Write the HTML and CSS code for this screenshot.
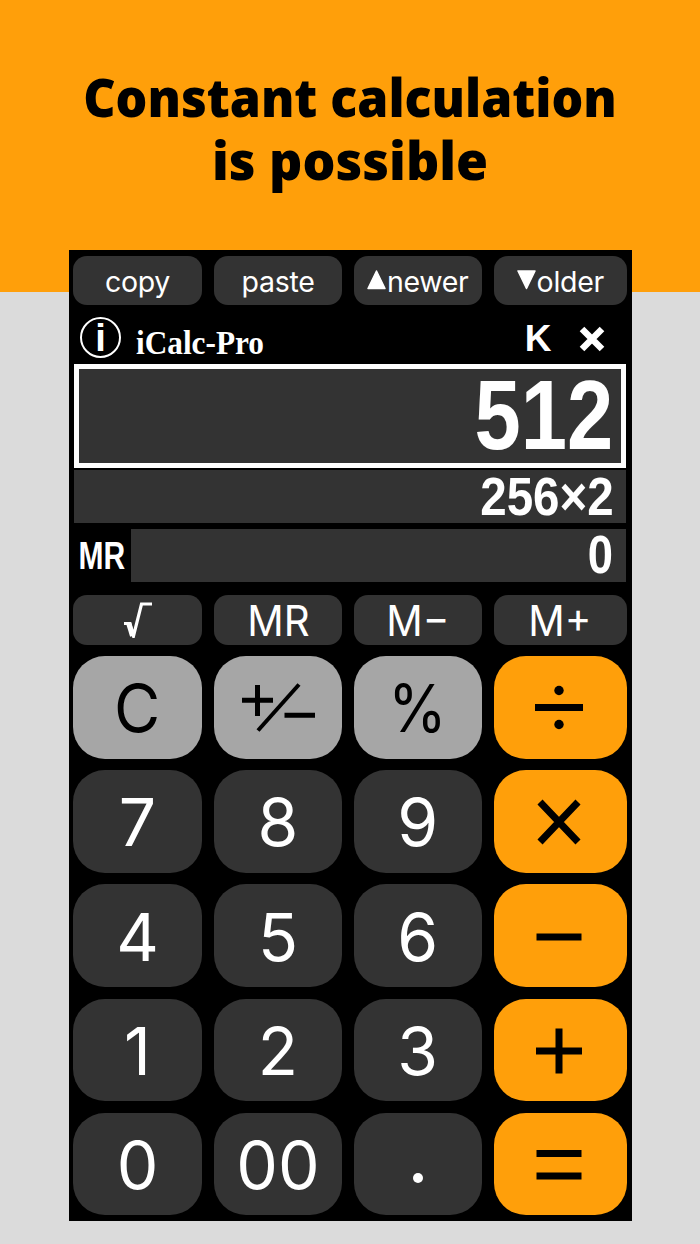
FILE: index.html
```
<!DOCTYPE html>
<html lang="en">
<head>
  <meta charset="UTF-8">
  <title>iCalc-Pro</title>
  <link rel="stylesheet" href="styles.css">
</head>
<body>
  <h1><span class="line1">Constant calculation</span><span class="line2">is possible</span></h1>

  <div class="calc">
    <div class="keys small">
      <button><span class="word">copy</span></button>
      <button><span class="word">paste</span></button>
      <button>
        <svg class="tri" width="20" height="20" viewBox="0 0 20 20"><path d="M9.500 1L18 18.500H1z"/></svg>
        <span class="word">newer</span>
      </button>
      <button>
        <svg class="tri" width="20" height="20" viewBox="0 0 20 20"><path d="M1 1h17L9.500 18.500z"/></svg>
        <span class="word">older</span>
      </button>
    </div>

    <div class="header">
      <div class="info"><span>i</span></div>
      <div class="name"><span>iCalc-Pro</span></div>
      <div class="constant">K</div>
      <svg class="mode" width="26" height="26" viewBox="0 0 26 26"><path d="M3 3l20 20M23 3L3 23"/></svg>
    </div>

    <div class="display"><span>512</span></div>
    <div class="formula"><span>256×2</span></div>
    <div class="memory">
      <div class="label"><span>MR</span></div>
      <div class="value"><span>0</span></div>
    </div>

    <div class="keys small mem">
      <button><svg width="30" height="36" viewBox="0 0 30 36"><path class="thin" d="M1 21.500h6L10.500 34L18.500 2H29"/><path class="thick" d="M5.700 21.500L9.500 34"/></svg></button>
      <button><span>MR</span></button>
      <button><span>M−</span></button>
      <button><span>M+</span></button>
    </div>

    <div class="keys big">
      <button class="gray"><span class="letter">C</span></button>
      <button class="gray"><svg width="76" height="50" viewBox="0 0 76 50"><path d="M2 18.200h31M17.500 3v31M44.500 33.200H75"/><path class="slash" d="M18 48.500L59 2.500"/></svg></button>
      <button class="gray"><span class="percent">%</span></button>
      <button class="op"><svg width="50" height="50" viewBox="0 0 50 50"><path d="M1 25.500h48"/><circle cx="25" cy="8.500" r="4.700"/><circle cx="25" cy="42.500" r="4.700"/></svg></button>
      <button><span>7</span></button>
      <button><span>8</span></button>
      <button><span>9</span></button>
      <button class="op"><svg width="50" height="50" viewBox="0 0 50 50"><path d="M6 6l38 40M44 6L6 46"/></svg></button>
      <button><span>4</span></button>
      <button><span>5</span></button>
      <button><span>6</span></button>
      <button class="op"><svg width="50" height="50" viewBox="0 0 50 50"><path d="M2.500 26h45"/></svg></button>
      <button><span>1</span></button>
      <button><span>2</span></button>
      <button><span>3</span></button>
      <button class="op"><svg width="50" height="50" viewBox="0 0 50 50"><path d="M2 26h46M25 3.500v45"/></svg></button>
      <button><span>0</span></button>
      <button><span>00</span></button>
      <button class="dot"><svg width="50" height="50" viewBox="0 0 50 50"><circle cx="25" cy="39" r="5"/></svg></button>
      <button class="op"><svg width="50" height="50" viewBox="0 0 50 50"><path d="M2.500 14.500h45M2.500 37h45"/></svg></button>
    </div>
  </div>
</body>
</html>
```
FILE: styles.css
```
* {
  box-sizing: border-box;
}

body {
  margin: 0;
  height: 1244px;
  overflow: hidden;
  background: linear-gradient(#ff9f0a 292px, #dbdbdb 292px);
  font-family: Inter, sans-serif;
}

h1 {
  height: 250px;
  margin: 0;
  padding-top: 65px;
  font-family: "Noto Sans", sans-serif;
  font-weight: 900;
  font-size: 53px;
  line-height: 63px;
  text-align: center;
  white-space: nowrap;
}

h1 span {
  display: block;
}

.line1 {
  transform: scaleX(0.943);
}

.line2 {
  transform: scaleX(0.978);
}

.calc {
  width: 563px;
  height: 971px;
  margin-left: 68.5px;
  padding: 5.500px 4px 0 4.500px;
  background: #000;
  color: #fff;
}

/* keys */
.keys {
  display: grid;
  grid-template-columns: 129px 128px 127.5px 133.5px;
  column-gap: 12px;
}

button {
  display: flex;
  align-items: center;
  justify-content: center;
  padding: 0;
  border: none;
  background: #333;
  color: #fff;
  font-family: Inter, sans-serif;
}

button span {
  padding-top: 2px;
}

svg {
  display: block;
}

.small button {
  height: 49.5px;
  border-radius: 14px;
  font-size: 28.5px;
}

.word {
  letter-spacing: -0.3px;
}

.tri {
  fill: #fff;
  stroke: #fff;
  stroke-width: 1.5;
  stroke-linejoin: round;
}

.mem {
  margin-top: 13.5px;
}

.mem button {
  font-size: 42px;
}

.mem button span {
  transform: scaleX(0.96);
}

.mem path {
  fill: none;
  stroke: #fff;
  stroke-width: 3.2;
}

.mem .thick {
  stroke-width: 5;
}

.big {
  margin-top: 11.5px;
  row-gap: 11.7px;
}

.big button {
  height: 102.5px;
  border-radius: 32px;
  font-size: 66px;
}

.big .gray {
  background: #a6a6a6;
  color: #000;
}

.big .op {
  background: #ff9f0a;
}

.letter {
  transform: scaleX(0.96);
}

.percent {
  transform: scaleX(0.9);
}

.gray path, .op path {
  fill: none;
  stroke: #000;
  stroke-width: 5;
}

.gray .slash {
  stroke-width: 4;
}

.op path {
  stroke-width: 7;
}

.op svg {
  margin-right: 2px;
}

.dot circle {
  fill: #fff;
}

/* title row */
.header {
  display: flex;
  align-items: center;
  height: 58.5px;
  padding: 6px 23px 0 7px;
}

.info {
  width: 41px;
  height: 41px;
  border: 2px solid #fff;
  border-radius: 50%;
  font: bold 38px/39px "Liberation Sans", sans-serif;
  text-align: center;
}

.name {
  flex: 1;
  margin: 12px 0 0 15px;
  font: bold 34px/40px "Liberation Serif", serif;
}

.name span {
  display: inline-block;
  transform: scaleX(0.92);
  transform-origin: left;
}

.constant {
  margin: 4px 27px 0 0;
  font: bold 37px/40px "Liberation Sans", sans-serif;
}

.mode {
  margin-top: 4px;
  stroke: #fff;
  stroke-width: 6.5;
}

/* displays */
.display, .formula, .value, .label {
  display: flex;
  align-items: center;
  justify-content: flex-end;
  font-family: "Liberation Sans", Arial, sans-serif;
  font-weight: bold;
}

.display, .formula, .memory {
  width: 551.5px;
  margin-left: 1px;
}

.display {
  height: 104.5px;
  padding-right: 7px;
  padding-bottom: 2px;
  border: 5px solid #fff;
  background: #333;
  font-size: 99px;
}

.display span, .formula span, .value span, .label span {
  transform: scaleX(0.84);
  transform-origin: right;
}

.formula {
  height: 53px;
  margin-top: 2px;
  padding-right: 12px;
  padding-bottom: 2px;
  background: #333;
  font-size: 54px;
}

.formula span {
  transform: scaleX(0.88);
}

.memory {
  display: flex;
  height: 53px;
  margin-top: 5.5px;
}

.memory .label {
  width: 57px;
  padding-right: 6px;
  padding-top: 3px;
  font-size: 38px;
}

.memory .label span {
  transform: scaleX(0.79);
}

.memory .value {
  flex: 1;
  padding-right: 12px;
  padding-bottom: 2px;
  background: #333;
  font-size: 54px;
}
```
